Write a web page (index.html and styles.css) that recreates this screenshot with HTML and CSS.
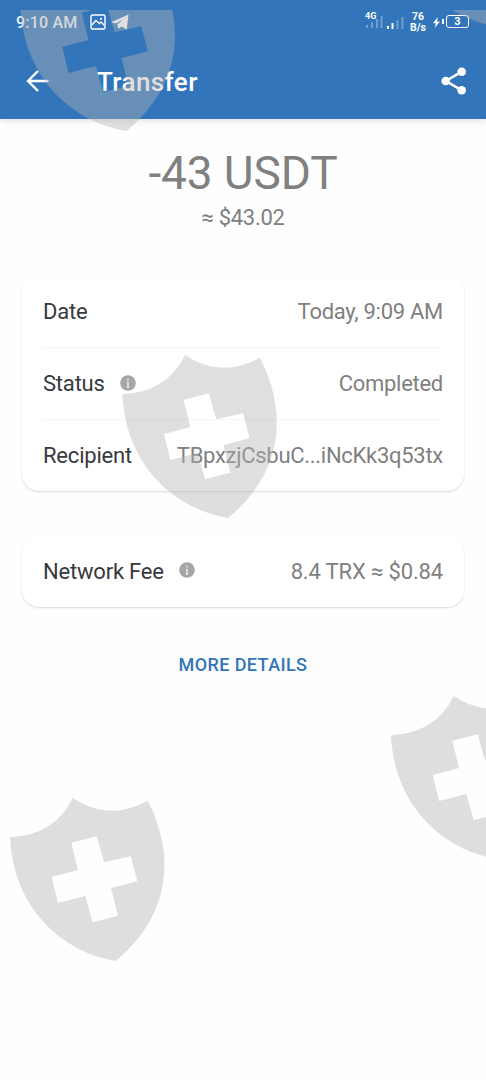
FILE: index.html
```
<!DOCTYPE html>
<html lang="en">
<head>
    <meta charset="UTF-8">
    <meta name="viewport" content="width=device-width, initial-scale=1.0">
    <title>Transfer</title>
    <link rel="stylesheet" href="styles.css">
</head>
<body>
    <div class="screen">
        <header>
            <div class="status-bar">
                <span class="time">9:10 AM</span>
                <svg class="picture-icon" width="16" height="16" viewBox="0 0 16 16" fill="none" stroke="#fff" stroke-width="1.4">
                    <rect x="1" y="1" width="14" height="14" rx="1.5" />
                    <path d="M2 11 L6 6.5 L9.5 9.5 L11 8 L14 11" />
                    <circle cx="11" cy="4.8" r=".4" />
                </svg>
                <svg class="telegram-icon" width="18" height="16" viewBox="0 0 18 16" fill="#fff">
                    <path d="M0 8.3 L17.5 .5 L15.8 15.5 L10.5 12.4 L7.3 14.8 L6.3 10.6 L12.2 5.2 L5 9.4 Z" />
                </svg>
                <div class="status-right">
                    <div class="signal">
                        <span>4G</span>
                        <svg width="18" height="12" viewBox="0 0 18 12" fill="#fff" opacity=".3">
                            <rect x="1" y="9" width="2" height="3" />
                            <rect x="6" y="6" width="2" height="6" />
                            <rect x="11" y="3" width="2" height="9" />
                            <rect x="15.5" y="0" width="2" height="12" />
                        </svg>
                    </div>
                    <svg class="signal2" width="18" height="12" viewBox="0 0 18 12" fill="#fff">
                        <rect x="1" y="9" width="2" height="3" />
                        <rect x="5.5" y="6" width="2" height="6" />
                        <rect x="10.5" y="3" width="2" height="9" opacity=".3" />
                        <rect x="15.5" y="0" width="2" height="12" opacity=".3" />
                    </svg>
                    <div class="speed">76<br>B/s</div>
                    <svg class="bolt" width="7" height="11" viewBox="0 0 7 11" fill="#fff">
                        <path d="M4.8 0 L0 6.2 H2.8 L1.8 11 L6.8 4.6 H3.9 Z" />
                    </svg>
                    <div class="battery">3</div>
                </div>
            </div>
            <div class="app-bar">
                <svg class="back" width="24" height="22" viewBox="0 0 24 22" fill="none" stroke="#fff" stroke-width="2.4">
                    <path d="M12 1 L2 11 L12 21 M2 11 H22.5" />
                </svg>
                <h1>Transfer</h1>
                <svg class="share" width="26" height="28" viewBox="0 0 26 28" fill="#fff">
                    <path d="M20.5 4.8 L4.7 14 L20.5 23.2" fill="none" stroke="#fff" stroke-width="2.5" />
                    <circle cx="20.7" cy="4.8" r="4.3" />
                    <circle cx="4.7" cy="14" r="4.3" />
                    <circle cx="20.7" cy="23.2" r="4.3" />
                </svg>
            </div>
        </header>

        <main>
            <div class="amount">-43 USDT</div>
            <div class="fiat">≈ $43.02</div>

            <div class="card">
                <div class="row">
                    <span class="label">Date</span>
                    <span class="value">Today, 9:09 AM</span>
                </div>
                <div class="row">
                    <span class="label">Status</span>
                    <svg class="info" width="16" height="16" viewBox="0 0 16 16">
                        <circle cx="8" cy="8" r="7.8" fill="#a6a6a6" />
                        <path d="M8 3.8 V5.6 M6.8 7.4 H8 V12 M6.8 12 H9.2" fill="none" stroke="#eee" stroke-width="1.4" />
                    </svg>
                    <span class="value">Completed</span>
                </div>
                <div class="row">
                    <span class="label">Recipient</span>
                    <span class="value">TBpxzjCsbuC...iNcKk3q53tx</span>
                </div>
            </div>

            <div class="card fee">
                <div class="row">
                    <span class="label">Network Fee</span>
                    <svg class="info" width="16" height="16" viewBox="0 0 16 16">
                        <circle cx="8" cy="8" r="7.8" fill="#a6a6a6" />
                        <path d="M8 3.8 V5.6 M6.8 7.4 H8 V12 M6.8 12 H9.2" fill="none" stroke="#eee" stroke-width="1.4" />
                    </svg>
                    <span class="value">8.4 TRX ≈ $0.84</span>
                </div>
            </div>

            <a class="more">MORE DETAILS</a>
        </main>

        <!-- shield watermarks over the whole screen -->
        <svg class="watermark" width="486" height="1080" viewBox="0 0 486 1080">
            <defs>
                <path id="shield" fill-rule="evenodd" d="M1 40.3 Q46 38 63.7 1 Q100 25 138.7 3.7 C166 57 163 117 107 164 C52 155 4 110 1 40.3 Z
                    M62.3 45.7 L87.7 39.3 L95 65.3 L121.7 59.3 L128.3 84 L102 91.3 L109 118.7 L83.7 125.3 L76.3 99 L49 106 L42.7 80 L69 73 Z" />
                <clipPath id="area"><rect x="0" y="10" width="486" height="1070" /></clipPath>
            </defs>
            <g clip-path="url(#area)">
                <use href="#shield" x="19.5" y="-33" />
                <use href="#shield" x="391" y="-137" />
                <use href="#shield" x="121.3" y="354" />
                <use href="#shield" x="390" y="695" />
                <use href="#shield" x="9" y="797" />
            </g>
        </svg>
    </div>
</body>
</html>
```
FILE: styles.css
```
html, body {
    padding: 0;
    margin: 0;
}
body {
    background: #fefefe;
    font-family: Roboto, "Noto Sans", sans-serif;
    color: #36393d;
}
svg {
    display: block;
    flex: none;
}
.screen {
    position: relative;
    width: 486px;
    height: 1080px;
    overflow: hidden;
}

header {
    height: 119px;
    background: #3375bb;
    color: #fff;
    box-shadow: 0 1px 7px rgba(0, 0, 0, 0.14);
}
.status-bar {
    display: flex;
    align-items: center;
    height: 44px;
    padding: 0 17px 0 16px;
}
.time {
    width: 74px;
    font-size: 16px;
    font-weight: 500;
    letter-spacing: 0.2px;
    opacity: 0.9;
}
.telegram-icon {
    margin-left: 5px;
}
.status-right {
    display: flex;
    align-items: center;
    margin-left: auto;
}
.signal {
    width: 18px;
    height: 20px;
    margin-right: 3px;
    font-size: 9px;
    font-weight: bold;
    line-height: 8px;
}
.signal span {
    display: block;
    height: 4px;
}
.signal2 {
    margin-top: 1px;
}
.speed {
    width: 18px;
    margin-left: 5px;
    font-size: 10.5px;
    font-weight: bold;
    line-height: 11px;
    text-align: center;
}
.bolt {
    margin: 0 3px 0 6px;
}
.battery {
    position: relative;
    box-sizing: border-box;
    width: 23px;
    height: 13px;
    margin: -1px 0 0 3px;
    border: 1.5px solid #fff;
    border-radius: 3px;
    font-size: 11px;
    font-weight: bold;
    line-height: 11px;
    text-align: center;
}
.battery::before {
    content: "";
    position: absolute;
    left: -5px;
    top: 3px;
    width: 2px;
    height: 5px;
    background: #fff;
}
.app-bar {
    display: flex;
    align-items: center;
    box-sizing: border-box;
    height: 75px;
    padding: 0 19px 2px 26px;
}
h1 {
    margin: 3px 0 0 47px;
    font-size: 26px;
    font-weight: 500;
    letter-spacing: 0.4px;
}
.share {
    margin-left: auto;
}

main {
    display: flex;
    flex-direction: column;
    padding: 0 22px;
}
.amount {
    margin-top: 26px;
    font-size: 46px;
    line-height: 56px;
    letter-spacing: -0.1px;
    text-align: center;
    color: #808080;
}
.fiat {
    margin-top: 4px;
    font-size: 22px;
    line-height: 26px;
    letter-spacing: -0.3px;
    text-align: center;
    color: #808080;
}
.card {
    margin-top: 44px;
    padding: 0 21px;
    border-radius: 17px;
    background: #fff;
    box-shadow: 0 1px 2px rgba(0, 0, 0, 0.15);
}
.row {
    display: flex;
    align-items: center;
    box-sizing: border-box;
    height: 72px;
    border-top: 1px solid #f5f5f5;
    font-size: 22px;
    letter-spacing: -0.2px;
}
.row:first-child {
    border-top: none;
}
.info {
    margin: -2px 0 0 15px;
}
.value {
    margin-left: auto;
    letter-spacing: -0.28px;
    color: #808080;
}
.fee .value {
    letter-spacing: -0.15px;
}
.more {
    margin: 46px auto 0;
    font-size: 18px;
    font-weight: 500;
    line-height: 24px;
    letter-spacing: 0.4px;
    color: #3375bb;
}

.watermark {
    position: absolute;
    left: 0;
    top: 0;
    fill: rgba(179, 179, 179, 0.42);
    pointer-events: none;
}
```
